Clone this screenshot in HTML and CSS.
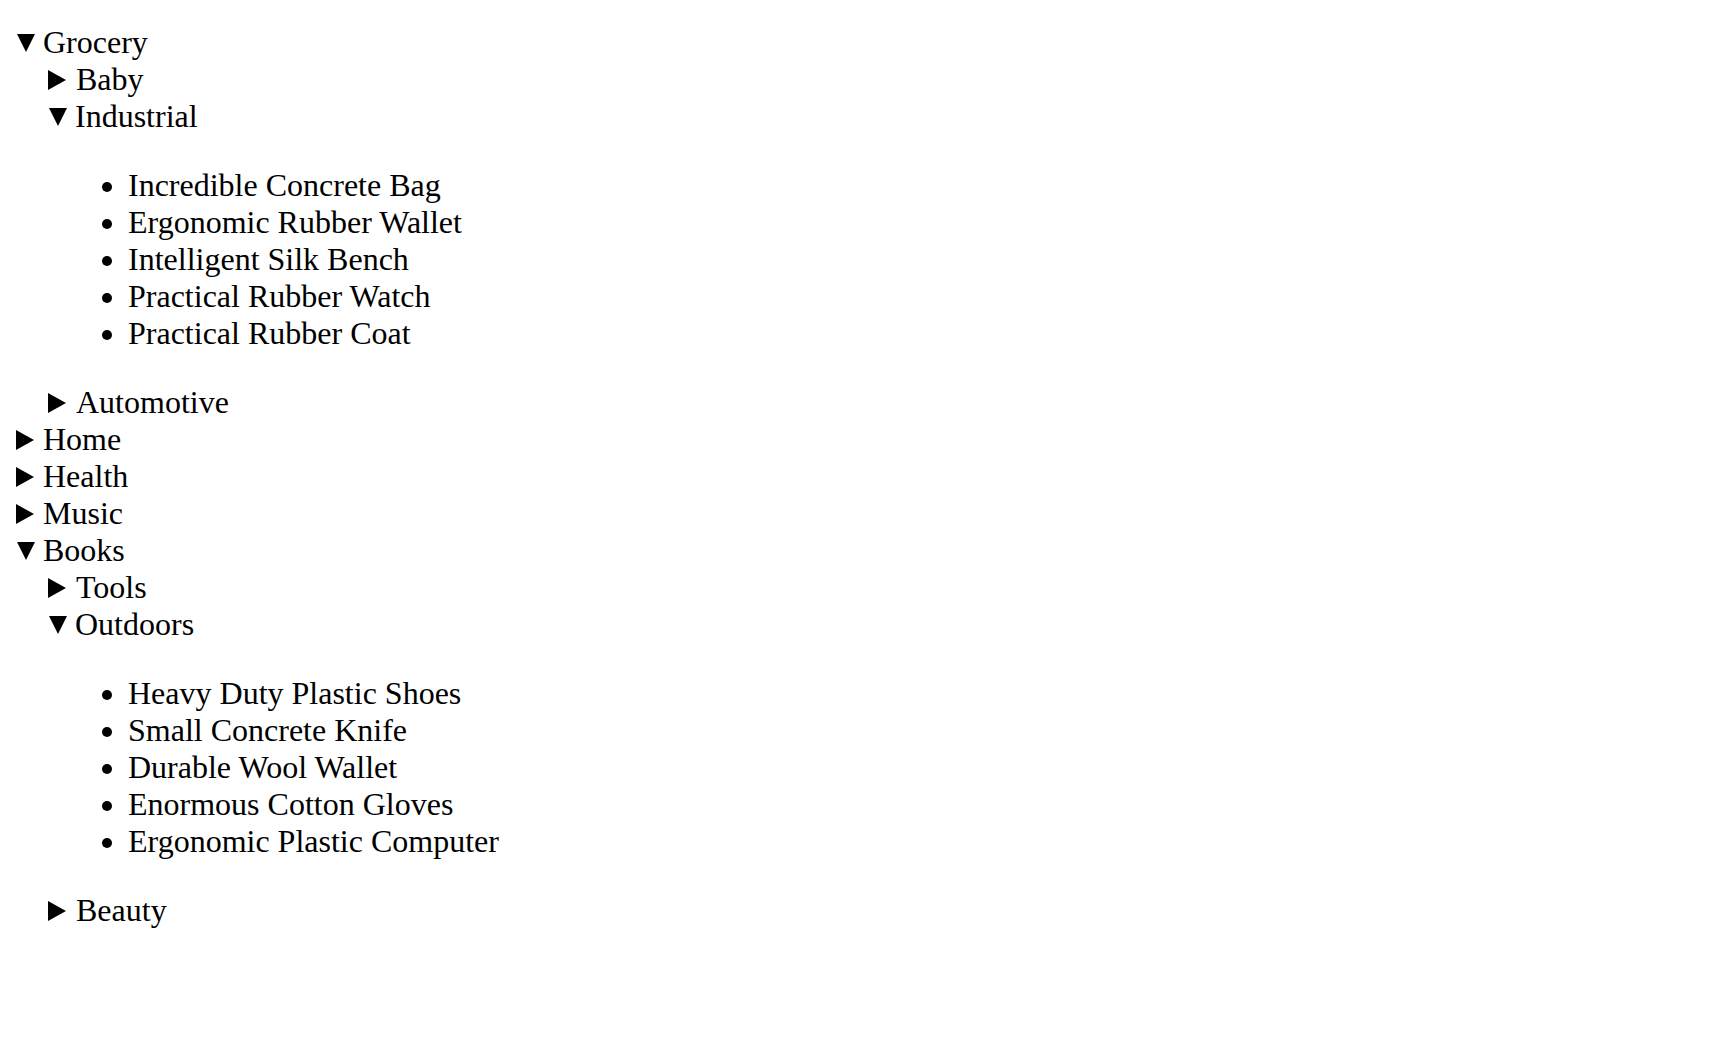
FILE: index.html
```html
<!DOCTYPE html>
<html>
<head>
<meta charset="utf-8">
<link rel="stylesheet" href="styles.css">
</head>
<body class="page">
<div class="tree">
  <details class="node cat" open>
    <summary>Grocery</summary>
    <details class="node sub"><summary>Baby</summary></details>
    <details class="node sub" open>
      <summary>Industrial</summary>
      <ul class="items">
        <li>Incredible Concrete Bag</li>
        <li>Ergonomic Rubber Wallet</li>
        <li>Intelligent Silk Bench</li>
        <li>Practical Rubber Watch</li>
        <li>Practical Rubber Coat</li>
      </ul>
    </details>
    <details class="node sub"><summary>Automotive</summary></details>
  </details>
  <details class="node cat"><summary>Home</summary></details>
  <details class="node cat"><summary>Health</summary></details>
  <details class="node cat"><summary>Music</summary></details>
  <details class="node cat" open>
    <summary>Books</summary>
    <details class="node sub"><summary>Tools</summary></details>
    <details class="node sub" open>
      <summary>Outdoors</summary>
      <ul class="items">
        <li>Heavy Duty Plastic Shoes</li>
        <li>Small Concrete Knife</li>
        <li>Durable Wool Wallet</li>
        <li>Enormous Cotton Gloves</li>
        <li>Ergonomic Plastic Computer</li>
      </ul>
    </details>
    <details class="node sub"><summary>Beauty</summary></details>
  </details>
</div>
</body>
</html>
```
FILE: styles.css
```css
html, body {
  background: #fff;
}
.page {
  margin: 0;
  padding: 24px 16px;
  font-family: "Liberation Serif", "Times New Roman", serif;
  font-size: 32px;
  color: #000;
}
.tree {
  display: block;
}
.sub {
  margin-left: 32px;
}
.node > summary {
  display: block;
  list-style: none;
  cursor: pointer;
}
.node > summary::-webkit-details-marker {
  display: none;
}
.node > summary::before {
  content: "";
  display: inline-block;
  width: 0;
  height: 0;
  border-style: solid;
  border-color: transparent transparent transparent #000;
  border-width: 10.5px 0 10.5px 18px;
  margin-right: 10px;
  vertical-align: 0;
}
.cat:not([open]) > summary::before {
  margin-right: 9px;
}
.node[open] > summary::before {
  border-color: #000 transparent transparent transparent;
  border-width: 18px 9.5px 0 9.5px;
  margin-left: 1px;
  margin-right: 8px;
  vertical-align: 1px;
}
.items {
  margin: 32px 0;
  padding-left: 80px;
}
```
